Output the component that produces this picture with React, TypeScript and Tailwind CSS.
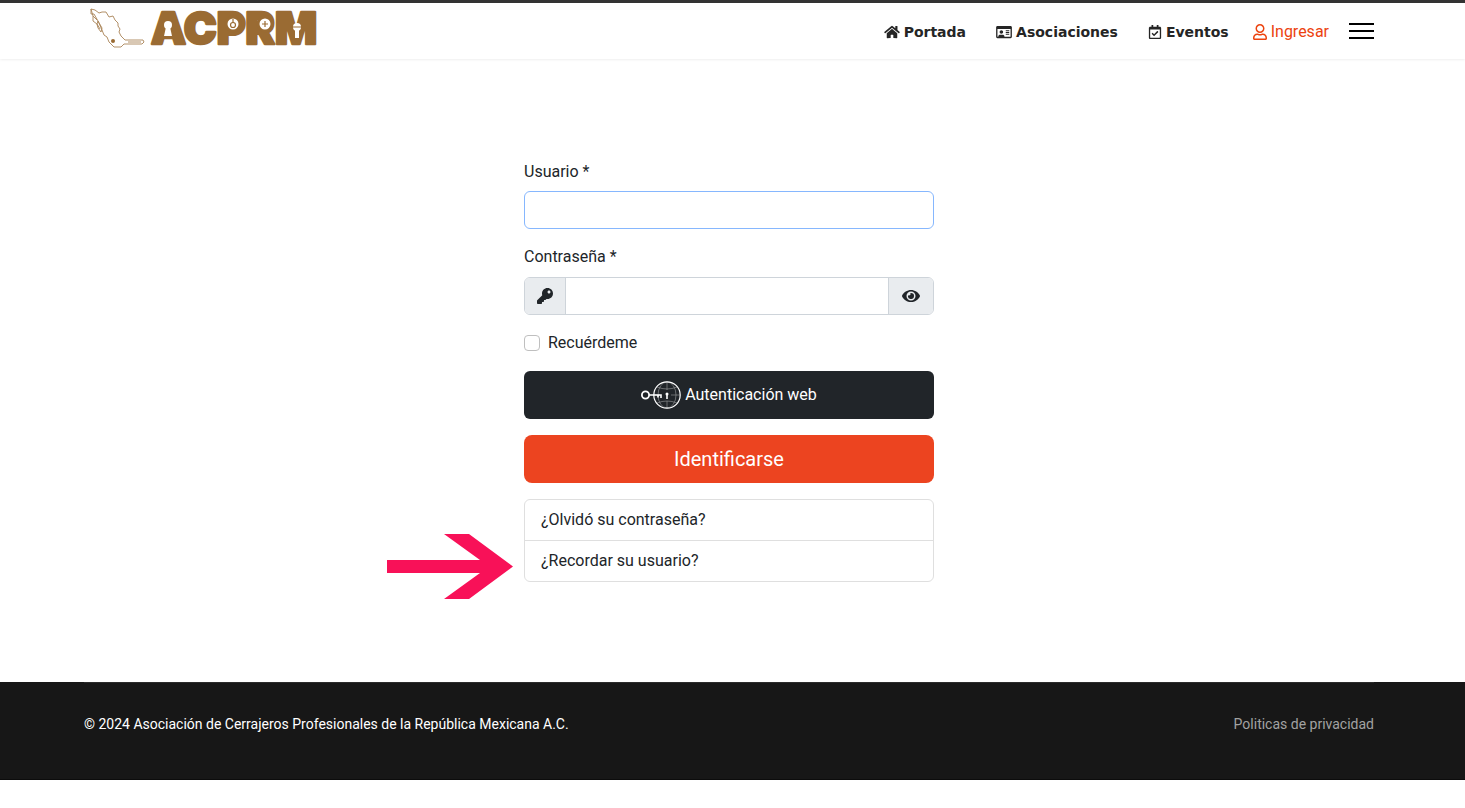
import { useState } from "react";
import { FaEye, FaHome, FaKey, FaRegCalendarCheck, FaRegIdCard, FaRegUser } from "react-icons/fa";

const NAV = [
  { href: "#portada", label: "Portada", icon: <FaHome className="h-3.5 w-4" /> },
  { href: "#asociaciones", label: "Asociaciones", icon: <FaRegIdCard className="h-3.5 w-4" /> },
  { href: "#eventos", label: "Eventos", icon: <FaRegCalendarCheck className="h-3.5 w-3.5" /> },
];

const HELP_LINKS = [
  { href: "#reset", label: "¿Olvidó su contraseña?" },
  { href: "#remind", label: "¿Recordar su usuario?" },
];

function Logo() {
  return (
    <svg width="244" height="48" viewBox="0 0 244 48" overflow="visible" role="img" aria-label="ACPRM">
      {/* map outline that ends in a key */}
      <g fill="none" stroke="#a98357" strokeWidth="0.9" strokeLinejoin="round">
        <path d="M7 4l4 1 4 3 3-1 4 0 3 5 4-1 2 4 3 3 0 3 2 3-1 3 2 4 4 4 6 0 12 0 1 2-2 2-18 0-3 3-7 0-5-5-2-5-3-2-2-5-4-9-4-7-3 0z" />
        <path d="M7 4l2 7 0 5 4 3 1 4 3 4 1-4-4-7-1 3 3 5M9 11l4 4M44 37h13" />
      </g>
      <circle cx="29" cy="36" r="2" fill="#9a6b33" />
      <text x="67" y="39" fontFamily="Inter, sans-serif" fontWeight="900" fontSize="44"
        fill="#9a6b33" stroke="#9a6b33" strokeWidth="2.500" strokeLinejoin="round">
        ACPRM
      </text>
      <g fill="#fff" stroke="#9a6b33" strokeWidth="3">
        <circle cx="149" cy="19" r="7" />
        <circle cx="181" cy="19" r="7" />
      </g>
      <g fill="#fff">
        <circle cx="84" cy="20" r="4" />
        <path d="M82 22h4l2 9h-8z" />
        <circle cx="213" cy="22" r="4" />
        <path d="M211 24h4v9h-4z" />
      </g>
      <g fill="none" stroke="#9a6b33" strokeWidth="1.2">
        <circle cx="149" cy="20" r="2.500" />
        <path d="M149 14v4M178 19h6M181 16v6M209 22h8" />
      </g>
    </svg>
  );
}

function WebAuthnIcon() {
  return (
    <svg width="40" height="28" viewBox="0 0 40 28" fill="none" stroke="#fff">
      <circle cx="26" cy="14" r="13.2" strokeWidth="1.2" />
      <g strokeWidth="0.6" opacity="0.55">
        <ellipse cx="26" cy="14" rx="9" ry="13" />
        <path d="M26 1v8M26 20v7M13 14h6M30 14h9M16 6q10 4 20 0M16 22q10-4 20 0" />
      </g>
      <circle cx="4.5" cy="14" r="3.6" strokeWidth="1.8" />
      <path d="M8 14h12v3M17 14v2.500" strokeWidth="1.6" />
      <circle cx="26" cy="13" r="1.500" fill="#fff" stroke="none" />
      <path d="M26 13v5" strokeWidth="1.6" />
    </svg>
  );
}

export default function App() {
  const [showPassword, setShowPassword] = useState(false);

  return (
    <div className="bg-white font-['Roboto','Liberation_Sans',sans-serif] text-base leading-6 text-[#212529]">
      {/* Header */}
      <header className="border-t-3 border-[#333] pr-[7px] shadow-[0_0_3px_rgba(0,0,0,0.12)]">
        <div className="mx-auto flex h-14 max-w-[1320px] items-center justify-between px-[15px]">
          <a href="#inicio" className="pb-1"><Logo /></a>
          <div className="flex items-center">
            <nav className="flex gap-[30px] pt-0.5 font-['DejaVu_Sans',sans-serif] text-sm font-bold text-[#252525]">
              {NAV.map((item) => (
                <a key={item.href} href={item.href} className="flex items-center gap-1">
                  {item.icon}
                  {item.label}
                </a>
              ))}
            </nav>
            <a href="#ingresar" className="ml-6 flex items-center gap-1 pt-0.5 text-[#ec430f]">
              <FaRegUser className="h-4 w-3.5" />
              Ingresar
            </a>
            <button type="button" aria-label="Menú" className="ml-5 flex w-[25px] flex-col gap-[5px]">
              <span className="h-0.5 w-full bg-black" />
              <span className="h-0.5 w-full bg-black" />
              <span className="h-0.5 w-full bg-black" />
            </button>
          </div>
        </div>
      </header>

      {/* Login form */}
      <main className="pt-[101px] pr-[7px] pb-[100px]">
        <div className="relative mx-auto w-full max-w-[410px]">
          <form className="flex flex-col gap-4" onSubmit={(e) => e.preventDefault()}>
            <div>
              <label htmlFor="username" className="mb-[7px] block">Usuario *</label>
              <input
                id="username"
                type="text"
                autoFocus
                className="block h-[38px] w-full rounded-md border border-[#86b7fe] px-3 outline-none"
              />
            </div>
            <div>
              <label htmlFor="password" className="mb-2 block">Contraseña *</label>
              <div className="flex h-[38px] overflow-hidden rounded-md border border-[#ced4da]">
                <span className="flex w-[41px] items-center justify-center border-r border-[#ced4da] bg-[#e9ecef]">
                  <FaKey className="h-4 w-4" />
                </span>
                <input
                  id="password"
                  type={showPassword ? "text" : "password"}
                  className="min-w-0 flex-1 px-3 outline-none"
                />
                <button
                  type="button"
                  aria-label="Mostrar contraseña"
                  onClick={() => setShowPassword(!showPassword)}
                  className="flex w-[45px] items-center justify-center border-l border-[#ced4da] bg-[#e9ecef]"
                >
                  <FaEye className="h-4 w-[18px]" />
                </button>
              </div>
            </div>
            <div className="flex items-center gap-2">
              <input
                id="remember"
                type="checkbox"
                className="h-4 w-4 appearance-none rounded-sm border border-[#bfbfbf] checked:bg-[#ec430f]"
              />
              <label htmlFor="remember">Recuérdeme</label>
            </div>
            <button type="button" className="flex h-12 items-center justify-center gap-1 rounded-md bg-[#212529] text-white">
              <WebAuthnIcon />
              Autenticación web
            </button>
            <button type="submit" className="h-12 rounded-lg bg-[#ec4420] text-xl text-white">
              Identificarse
            </button>
          </form>
          <ul className="mt-4 divide-y divide-[#dfdfdf] rounded-md border border-[#dfdfdf]">
            {HELP_LINKS.map((link) => (
              <li key={link.href}>
                <a href={link.href} className="block px-4 py-2">{link.label}</a>
              </li>
            ))}
          </ul>
          {/* Arrow pointing at the username reminder */}
          <svg className="absolute right-full -bottom-[17px] mr-[11px]" width="126" height="65" viewBox="0 0 126 65" fill="#f81158">
            <path d="M0 26h93L57 0h25l44 32.500L82 65H57l36-26H0z" />
          </svg>
        </div>
      </main>

      {/* Footer */}
      <footer className="border-b border-[#0c0c0c] bg-[#171717] pr-[7px] text-sm">
        <div className="mx-auto max-w-[1320px] px-[15px]">
          <div className="flex items-center justify-between border-t border-[#2b2b2b] pt-[31px] pb-[45px]">
            <span className="text-white">© 2024 Asociación de Cerrajeros Profesionales de la República Mexicana A.C.</span>
            <a href="#privacidad" className="text-[#a2a2a2]">Politicas de privacidad</a>
          </div>
        </div>
      </footer>
    </div>
  );
}
